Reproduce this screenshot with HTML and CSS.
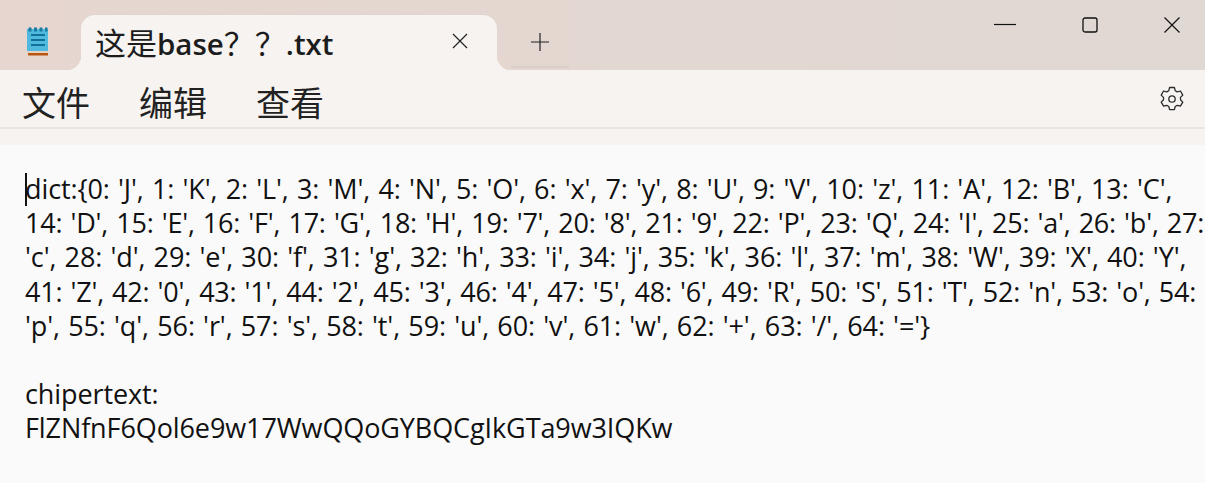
FILE: index.html
```html
<!DOCTYPE html>
<html lang="zh-CN">
<head>
  <meta charset="UTF-8" />
  <title>这是base??.txt</title>
  <link rel="stylesheet" href="styles.css">
</head>
<body>
  <div class="titlebar">
    <div class="app-icon">
      <svg width="26" height="30" viewBox="0 0 26 30">
        <rect x="2" y="3" width="21" height="22" fill="#4fb9de"/>
        <rect x="2" y="25" width="21" height="2" fill="#e6d2c4"/>
        <rect x="3" y="27" width="20" height="2.500" fill="#b9560f"/>
        <path d="M3.500 1.500h3v4h-3zM9 1.500h3v4H9zM14.500 1.500h3v4h-3zM20 1.500h2.500v4H20z" fill="#1b7aa0"/>
        <path d="M6 9h14M6 14h14M6 19h14" stroke="#0f7198" stroke-width="2"/>
      </svg>
    </div>
    <div class="tab">
      <span class="tab-title"><span class="cjk">这是</span>base<span class="cjk">？？</span>.txt</span>
      <svg class="tab-close" width="16" height="16" viewBox="0 0 16 16"><path d="M1 1l14 14M15 1L1 15" stroke="#222" stroke-width="1.200" fill="none"/></svg>
    </div>
    <div class="new-tab">
      <svg width="18" height="18" viewBox="0 0 18 18"><path d="M0 9h18M9 0v18" stroke="#222" stroke-width="1.200" fill="none"/></svg>
    </div>
    <div class="win-controls">
      <svg width="22" height="16" viewBox="0 0 22 16"><path d="M0 7.500h22" stroke="#111" stroke-width="1.200"/></svg>
      <svg width="16" height="16" viewBox="0 0 16 16"><rect x="1" y="1" width="14" height="14" rx="2" fill="none" stroke="#111" stroke-width="1.300"/></svg>
      <svg width="16" height="16" viewBox="0 0 16 16"><path d="M.5.500l15 15M15.500.500l-15 15" stroke="#111" stroke-width="1.200" fill="none"/></svg>
    </div>
  </div>

  <div class="menubar">
    <span class="menu-item">文件</span>
    <span class="menu-item">编辑</span>
    <span class="menu-item">查看</span>
    <svg class="gear" width="26" height="26" viewBox="0 0 26 26">
      <path d="M10.600 1.500h4.800l.8 3.200 2.100 1.200 3.100-.9 2.400 4.100-2.300 2.300v2.400l2.300 2.300-2.400 4.100-3.100-.9-2.100 1.200-.8 3.200h-4.800l-.8-3.200-2.100-1.200-3.100.9-2.400-4.100 2.300-2.300v-2.400L2.200 9.100l2.400-4.100 3.100.9 2.100-1.200z" fill="none" stroke="#2b2b2b" stroke-width="1.300" stroke-linejoin="round"/>
      <circle cx="13" cy="13" r="3.200" fill="none" stroke="#2b2b2b" stroke-width="1.300"/>
    </svg>
  </div>

  <div class="editor">
    <span class="caret"></span>
    <div class="line">dict:{0: 'J', 1: 'K', 2: 'L', 3: 'M', 4: 'N', 5: 'O', 6: 'x', 7: 'y', 8: 'U', 9: 'V', 10: 'z', 11: 'A', 12: 'B', 13: 'C',</div>
    <div class="line tight">14: 'D', 15: 'E', 16: 'F', 17: 'G', 18: 'H', 19: '7', 20: '8', 21: '9', 22: 'P', 23: 'Q', 24: 'I', 25: 'a', 26: 'b', 27:</div>
    <div class="line">'c', 28: 'd', 29: 'e', 30: 'f', 31: 'g', 32: 'h', 33: 'i', 34: 'j', 35: 'k', 36: 'l', 37: 'm', 38: 'W', 39: 'X', 40: 'Y',</div>
    <div class="line tight">41: 'Z', 42: '0', 43: '1', 44: '2', 45: '3', 46: '4', 47: '5', 48: '6', 49: 'R', 50: 'S', 51: 'T', 52: 'n', 53: 'o', 54:</div>
    <div class="line">'p', 55: 'q', 56: 'r', 57: 's', 58: 't', 59: 'u', 60: 'v', 61: 'w', 62: '+', 63: '/', 64: '='}</div>
    <div class="line">&nbsp;</div>
    <div class="line">chipertext:</div>
    <div class="line">FlZNfnF6Qol6e9w17WwQQoGYBQCgIkGTa9w3IQKw</div>
  </div>
</body>
</html>
```
FILE: styles.css
```css
html, body {
  margin: 0;
  height: 100%;
  overflow: hidden;
}
body {
  font-family: "Open Sans", "Noto Sans CJK SC", sans-serif;
  background: #fafafa;
  color: #111;
}
.titlebar {
  height: 70px;
  box-sizing: border-box;
  padding: 15px 0 0 25px;
  background: linear-gradient(90deg, #e6d6cf, #e0d8d3);
  display: flex;
  align-items: flex-start;
}
.app-icon {
  width: 56px;
  height: 40px;
  padding-top: 11px;
  box-sizing: border-box;
}
.tab {
  width: 416px;
  height: 55px;
  box-sizing: border-box;
  padding: 0 29px 3px 14px;
  background: #f6f3f1;
  border-radius: 14px 14px 0 0;
  box-shadow: 0 -1px 0 #e0d4ce;
  display: flex;
  align-items: center;
  justify-content: space-between;
  position: relative;
}
.tab::before,
.tab::after {
  content: "";
  position: absolute;
  bottom: 0;
  width: 14px;
  height: 14px;
  background: #e5d7d0;
}
.tab::before {
  left: -14px;
  border-bottom-right-radius: 14px;
  box-shadow: 4px 4px 0 #f6f3f1;
}
.tab::after {
  right: -14px;
  border-bottom-left-radius: 14px;
  box-shadow: -4px 4px 0 #f6f3f1;
}
.tab-title {
  font-size: 29.500px;
  font-weight: 600;
  color: #1c1c1c;
  white-space: pre;
}
.cjk {
  font-family: "Noto Sans CJK SC", sans-serif;
  font-size: 31px;
  font-weight: 400;
}
.new-tab {
  width: 72px;
  height: 53px;
  padding: 2px 0 0 34px;
  box-sizing: border-box;
  border-bottom: 2px solid #dbcec8;
  display: flex;
  align-items: center;
}
.win-controls {
  margin-left: auto;
  margin-right: 25px;
  margin-top: 2px;
  display: flex;
  gap: 66px;
}
.menubar {
  height: 57px;
  box-sizing: border-box;
  padding: 6px 20px 0 22px;
  background: #f6f3f1;
  display: flex;
  align-items: center;
  gap: 49px;
}
.menu-item {
  font-size: 34px;
  color: #222;
}
.gear {
  margin-left: auto;
  margin-top: -6px;
}
.editor {
  border-top: 2px solid #e8e5e3;
  padding: 43px 0 0 25px;
  position: relative;
  background: linear-gradient(#f6f3f1 16px, #fafafa 16px);
}
.line {
  font-size: 27px;
  line-height: 34.200px;
  white-space: nowrap;
  letter-spacing: -0.1px;
  word-spacing: 1.300px;
}
.tight {
  letter-spacing: -0.2px;
}
.caret {
  position: absolute;
  left: 25px;
  top: 44px;
  width: 2px;
  height: 33px;
  background: #111;
}
```
